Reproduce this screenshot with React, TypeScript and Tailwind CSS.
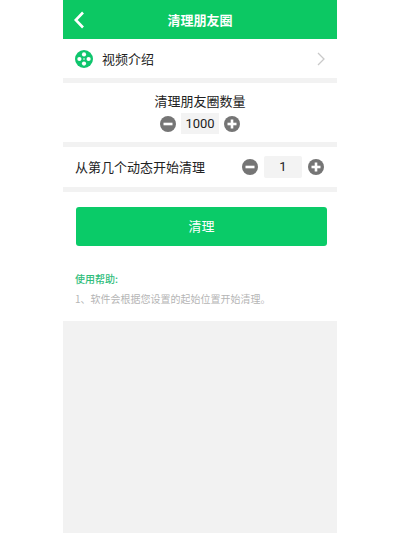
const font = { fontFamily: '"Noto Sans CJK SC", "Liberation Sans", sans-serif' };
const digits = { fontFamily: 'Roboto, "Liberation Sans", sans-serif' };

function MinusIcon() {
  return (
    <svg viewBox="0 0 16 16" className="h-[16px] w-[16px]">
      <circle cx="8" cy="8" r="8" fill="#757575" />
      <rect x="3.5" y="6.7" width="9" height="2.6" fill="#fff" />
    </svg>
  );
}

function PlusIcon() {
  return (
    <svg viewBox="0 0 16 16" className="h-[16px] w-[16px]">
      <circle cx="8" cy="8" r="8" fill="#757575" />
      <rect x="3.5" y="6.7" width="9" height="2.6" fill="#fff" />
      <rect x="6.7" y="3.5" width="2.6" height="9" fill="#fff" />
    </svg>
  );
}

function Stepper({ value, wide }: { value: string; wide: boolean }) {
  return (
    <div className={wide ? "flex items-center gap-[6px]" : "flex items-center gap-[5px]"}>
      <MinusIcon />
      <div
        className={
          wide
            ? "flex h-[22px] w-[38px] items-center justify-center rounded-[2px] bg-[#f3f3f3] text-[13px] text-[#222]"
            : "flex h-[21px] w-[38px] items-center justify-center bg-[#f3f3f3] text-[13px] text-[#222]"
        }
        style={digits}
      >
        {value}
      </div>
      <PlusIcon />
    </div>
  );
}

export default function App() {
  return (
    <div className="flex h-[533px] w-[400px] justify-center bg-white" style={font}>
      <div className="flex w-[274px] flex-col">
        <div className="relative flex h-[39px] shrink-0 items-center justify-center bg-[#0cc863]">
          <svg viewBox="0 0 12 18" className="absolute left-[10px] top-[11px] h-[18px] w-[12px]">
            <path d="M10 1.5 L2.8 9 L10 16.5" fill="none" stroke="#fff" strokeWidth="2.6" />
          </svg>
          <span className="text-[13px] font-bold text-white">清理朋友圈</span>
        </div>

        <div className="flex h-[39px] shrink-0 items-center pl-[12px] pr-[12px]">
          <svg viewBox="0 0 18 18" className="h-[18px] w-[18px]">
            <circle cx="9" cy="9" r="9" fill="#0fc56d" />
            <circle cx="9" cy="4.4" r="2.1" fill="#fff" />
            <circle cx="9" cy="13.6" r="2.1" fill="#fff" />
            <circle cx="4.4" cy="9" r="2.1" fill="#fff" />
            <circle cx="13.6" cy="9" r="2.1" fill="#fff" />
            <circle cx="9" cy="9" r="0.8" fill="#fff" />
          </svg>
          <span className="ml-[9px] text-[13px] text-[#222]">视频介绍</span>
          <svg viewBox="0 0 8 14" className="ml-auto h-[14px] w-[8px]">
            <path d="M1 1 L7 7 L1 13" fill="none" stroke="#c9c9c9" strokeWidth="1.3" />
          </svg>
        </div>

        <div className="h-[5px] shrink-0 bg-[#f2f2f2]" />

        <div className="flex h-[59px] shrink-0 flex-col items-center pt-[8px]">
          <span className="text-[13px] leading-[19px] text-[#222]">清理朋友圈数量</span>
          <div className="mt-[3px]">
            <Stepper value="1000" wide={false} />
          </div>
        </div>

        <div className="h-[5px] shrink-0 bg-[#f2f2f2]" />

        <div className="flex h-[40px] shrink-0 items-center justify-between pl-[12px] pr-[13px]">
          <span className="text-[13px] text-[#222]">从第几个动态开始清理</span>
          <Stepper value="1" wide={true} />
        </div>

        <div className="h-[5px] shrink-0 bg-[#f2f2f2]" />

        <div className="pl-[13px] pr-[10px] pt-[15px]">
          <div className="flex h-[39px] items-center justify-center rounded-[3px] bg-[#0acb68] pb-[2px] text-[13px] text-white">
            清理
          </div>
        </div>

        <div className="flex h-[75px] shrink-0 flex-col pl-[12px] pt-[26px]">
          <span className="text-[10px] leading-[14px] font-medium text-[#2fbd7b]">使用帮助:</span>
          <span className="mt-[6px] text-[10px] leading-[14px] text-[#b5b5b5]">
            1、软件会根据您设置的起始位置开始清理。
          </span>
        </div>

        <div className="flex-1 bg-[#f2f2f2]" />
      </div>
    </div>
  );
}
